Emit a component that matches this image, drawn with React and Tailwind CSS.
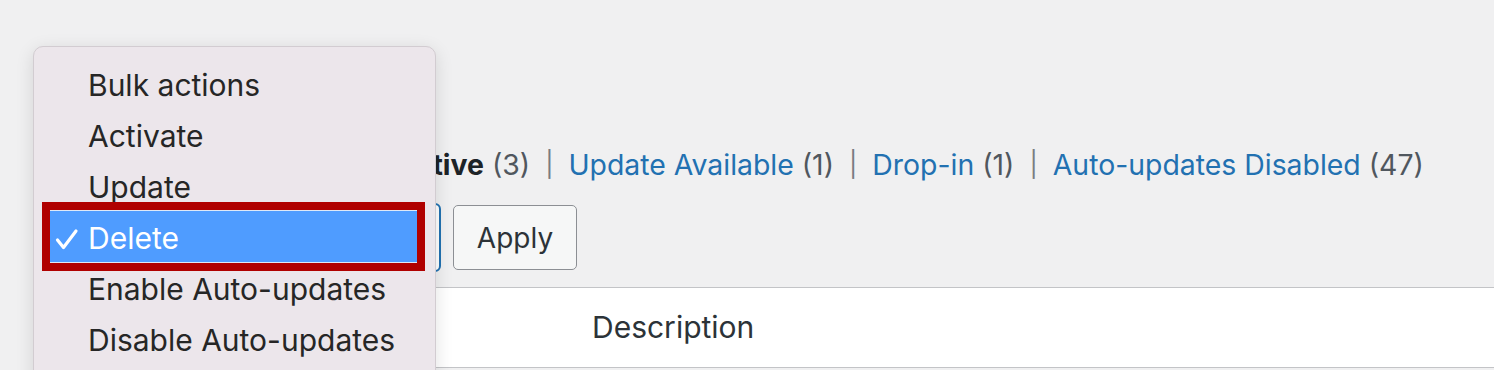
import { useState } from "react";

const menuItems = ["Bulk actions", "Activate", "Update", "Delete", "Enable Auto-updates", "Disable Auto-updates"];

function Sep() {
    return <span className="mx-[15px] text-[25px] text-[#787c82]">|</span>;
}

function BulkMenu({ selected }) {
    return (
        <div className="absolute left-[33px] top-[46px] w-[403px] h-[360px] rounded-[10px] border border-[#d2ccd1] bg-[#ece6eb] pt-[11px] shadow-[0_4px_18px_rgba(0,0,0,0.12)] z-10">
            {menuItems.map((item) =>
                item === selected ? (
                    <div key={item} className="relative h-[51px]">
                        <div className="absolute -top-[9px] -bottom-[9px] left-[8px] right-[10px] border-[8px] border-[#b00000]">
                            <div className="flex h-full items-center border-y border-[#dfe9f7] bg-[#4f9cff] pt-[4px] text-white">
                                <svg width="24" height="22" viewBox="0 0 24 22" className="ml-[5px] mr-[9px]">
                                    <path d="M2.5 12 L8.5 19.5 L21 3" fill="none" stroke="white" strokeWidth="3.2" strokeLinecap="round" strokeLinejoin="round" />
                                </svg>
                                <span>{item}</span>
                            </div>
                        </div>
                    </div>
                ) : (
                    <div key={item} className="flex h-[51px] items-center pl-[54px] pt-[4px] text-[#262626]">
                        {item}
                    </div>
                )
            )}
        </div>
    );
}

export default function App() {
    const [selected] = useState("Delete");

    return (
        <div className="relative h-[370px] w-[1494px] overflow-hidden bg-[#f0f0f1] font-['Inter','Liberation_Sans',sans-serif]">
            <ul className="mt-[146px] flex h-[38px] items-center whitespace-nowrap pl-[238px] text-[28.4px]">
                <li className="text-[#50575e]"><span className="text-[#2271b1]">All</span> (50)</li>
                <Sep />
                <li className="text-[#50575e]"><span className="font-bold text-[#1d2327]">Inactive</span> (3)</li>
                <Sep />
                <li className="text-[#50575e]"><span className="text-[#2271b1]">Update Available</span> (1)</li>
                <Sep />
                <li className="text-[#50575e]"><span className="text-[#2271b1]">Drop-in</span> (1)</li>
                <Sep />
                <li className="text-[#50575e]"><span className="text-[#2271b1]">Auto-updates Disabled</span> (47)</li>
            </ul>

            <div className="mt-[19px] flex items-center gap-[12px] pl-[40px]">
                <div className="h-[69px] w-[401px] rounded-[6px] border-2 border-[#2271b1] bg-white"></div>
                <button className="h-[65px] w-[124px] rounded-[5px] border-[1.5px] border-[#8c8f94] bg-[#f6f7f7] text-[28px] text-[#2c3338]">
                    Apply
                </button>
            </div>

            <div className="ml-[40px] mt-[15px] flex h-[81px] items-center border-y border-[#c3c4c7] bg-white pl-[552px] text-[30px] text-[#2c3338]">
                Description
            </div>

            <div className="text-[30px]">
                <BulkMenu selected={selected} />
            </div>
        </div>
    );
}
